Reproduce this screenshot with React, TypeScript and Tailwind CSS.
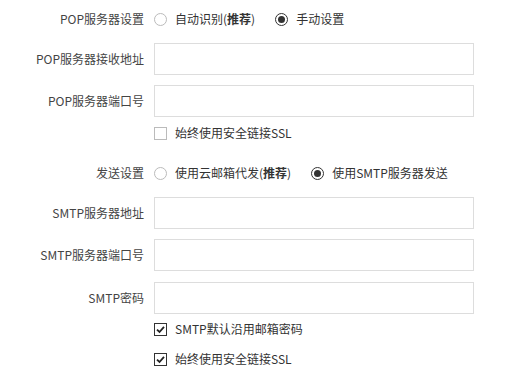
const font = { fontFamily: '"Noto Sans CJK SC", "Noto Sans", sans-serif' };

const Radio = ({ checked }: { checked?: boolean }) => (
    <span
        className={
            'flex h-[13px] w-[13px] shrink-0 items-center justify-center rounded-full border ' +
            (checked ? 'border-[#333]' : 'border-[#bbb]')
        }
    >
        {checked && <span className="h-[7px] w-[7px] rounded-full bg-[#333]" />}
    </span>
);

const Checkbox = ({ checked }: { checked?: boolean }) => (
    <span
        className={
            'flex h-[13px] w-[13px] shrink-0 items-center justify-center border ' +
            (checked ? 'border-[#333]' : 'border-[#bbb]')
        }
    >
        {checked && (
            <svg width="9" height="9" viewBox="0 0 9 9">
                <path d="M1 4.6 L3.5 7 L8 1.8" fill="none" stroke="#222" strokeWidth="1.8" />
            </svg>
        )}
    </span>
);

const Label = ({ children }: { children?: React.ReactNode }) => (
    <div className="w-[144px] shrink-0 text-right text-[12px] text-[#444]">{children}</div>
);

const InputRow = ({ label, className }: { label: string; className: string }) => (
    <div className={'flex h-[32px] items-center gap-[10px] ' + className}>
        <Label>{label}</Label>
        <div className="h-[32px] w-[320px] border border-[#ddd] bg-white" />
    </div>
);

const App = () => {
    return (
        <div className="h-[379px] w-[523px] bg-white pt-[7px] text-[#333]" style={font}>
            {/* POP */}
            <div className="flex h-[24px] items-center gap-[10px]">
                <Label>POP服务器设置</Label>
                <div className="flex items-center text-[12px]">
                    <Radio />
                    <span className="ml-[8px]">
                        自动识别(<b className="font-bold">推荐</b>)
                    </span>
                    <span className="ml-[20px]">
                        <Radio checked />
                    </span>
                    <span className="ml-[8px]">手动设置</span>
                </div>
            </div>
            <InputRow label="POP服务器接收地址" className="mt-[12px]" />
            <InputRow label="POP服务器端口号" className="mt-[10px]" />
            <div className="mt-[4px] flex h-[24px] items-center gap-[10px]">
                <Label />
                <div className="flex items-center text-[12px]">
                    <Checkbox />
                    <span className="ml-[8px]">始终使用安全链接SSL</span>
                </div>
            </div>

            {/* SMTP */}
            <div className="mt-[16px] flex h-[24px] items-center gap-[10px]">
                <Label>发送设置</Label>
                <div className="flex items-center text-[12px]">
                    <Radio />
                    <span className="ml-[8px]">
                        使用云邮箱代发(<b className="font-bold">推荐</b>)
                    </span>
                    <span className="ml-[20px]">
                        <Radio checked />
                    </span>
                    <span className="ml-[8px]">使用SMTP服务器发送</span>
                </div>
            </div>
            <InputRow label="SMTP服务器地址" className="mt-[12px]" />
            <InputRow label="SMTP服务器端口号" className="mt-[10px]" />
            <InputRow label="SMTP密码" className="mt-[11px]" />
            <div className="mt-[3px] flex h-[24px] items-center gap-[10px]">
                <Label />
                <div className="flex items-center text-[12px]">
                    <Checkbox checked />
                    <span className="ml-[8px]">SMTP默认沿用邮箱密码</span>
                </div>
            </div>
            <div className="mt-[6px] flex h-[24px] items-center gap-[10px]">
                <Label />
                <div className="flex items-center text-[12px]">
                    <Checkbox checked />
                    <span className="ml-[8px]">始终使用安全链接SSL</span>
                </div>
            </div>
        </div>
    );
};

export default App;
